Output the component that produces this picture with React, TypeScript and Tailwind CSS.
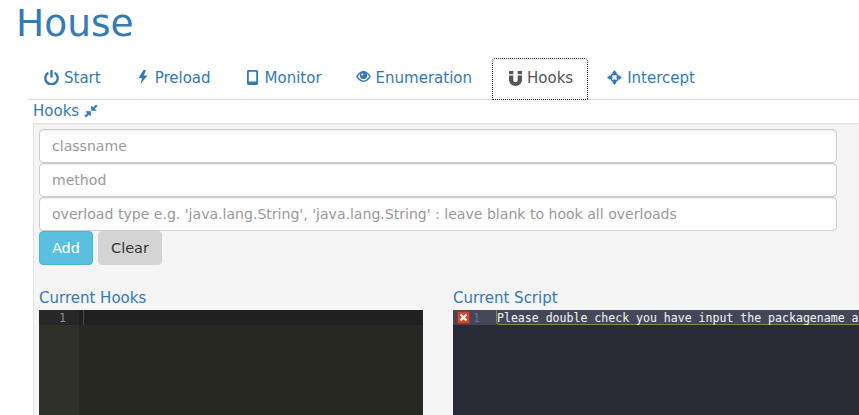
import React from "react";

const Power = () => (
  <svg width="15" height="15" viewBox="0 0 15 15" className="mr-[5px] shrink-0">
    <path d="M4.300 2.800A6.200 6.200 0 1 0 10.700 2.800" fill="none" stroke="currentColor" strokeWidth="2.400" />
    <rect x="6.300" y="0" width="2.400" height="7.500" fill="currentColor" />
  </svg>
);
const Bolt = () => (
  <svg width="15" height="15" viewBox="0 0 15 15" className="mr-[5px] shrink-0">
    <path d="M8.500 0 3.500 8H7L5.500 14l7-8.500H8.800L11 0z" fill="currentColor" />
  </svg>
);
const Phone = () => (
  <svg width="15" height="15" viewBox="0 0 15 15" className="mr-[5px] shrink-0">
    <path fillRule="evenodd" d="M3.500 0h8A1.500 1.500 0 0 1 13 1.500v12a1.500 1.500 0 0 1-1.500 1.500h-8A1.500 1.500 0 0 1 2 13.500v-12A1.500 1.500 0 0 1 3.500 0zM3.800 1.800v9.700h7.400V1.800z" fill="currentColor" />
  </svg>
);
const Eye = () => (
  <svg width="15" height="15" viewBox="0 0 15 15" className="mr-[5px] shrink-0">
    <path fillRule="evenodd" d="M0 6.500C2 3 4.700 1 7.500 1S13 3 15 6.500C13 9.800 10.300 12 7.500 12S2 9.800 0 6.500zM1.800 6.500C3.200 8.900 5.200 10.400 7.500 10.400S11.800 8.900 13.200 6.500C12.400 5.200 11.500 4.300 10.500 3.500A3.600 3.600 0 1 1 4.500 3.500C3.500 4.300 2.600 5.200 1.800 6.500z" fill="currentColor" />
    <circle cx="6.300" cy="4.500" r="1" fill="#fff" />
  </svg>
);
const Magnet = () => (
  <svg width="15" height="15" viewBox="0 0 15 15" className="mr-[4px] shrink-0">
    <path d="M1 4.500h4.300V9a2.200 2.200 0 0 0 4.400 0V4.500H14V9A6.500 6 0 0 1 1 9z" fill="currentColor" />
    <rect x="1" y="0" width="4.300" height="3.200" fill="currentColor" />
    <rect x="9.700" y="0" width="4.300" height="3.200" fill="currentColor" />
  </svg>
);
const Move = () => (
  <svg width="15" height="15" viewBox="0 0 15 15" className="mr-[5px] shrink-0">
    <path d="M7.500 0l2.300 3H8.700v2.500H6.300V3H5.200zM7.500 15l-2.300-3h1.100V9.500h2.400V12h1.100zM0 7.500l3-2.300v1.100h2.500v2.400H3v1.100zM15 7.500l-3 2.300V8.700H9.500V6.300H12V5.200z" fill="currentColor" />
    <circle cx="7.500" cy="7.500" r="3.700" fill="none" stroke="currentColor" strokeWidth="1.700" />
  </svg>
);
const Squeeze = () => (
  <svg width="14" height="14" viewBox="0 0 14 14" className="shrink-0">
    <path d="M7.200 6.800V1.500l2 1.800L12 .4 13.600 2l-2.900 2.800 2 2zM6.800 7.200v5.300l-2-1.800L2 13.600.4 12l2.900-2.800-2-2z" fill="currentColor" />
  </svg>
);

const tabClass = "flex items-center h-[41px] pb-[2px] px-[16px] text-[#337ab7] mr-[2px]";

function Field({ placeholder }: { placeholder: string }) {
  return (
    <input
      placeholder={placeholder}
      className="block w-full h-[34px] px-3 bg-white border border-[#ccc] rounded text-[14.070px] text-[#555] placeholder:text-[#999] shadow-[inset_0_1px_1px_rgba(0,0,0,0.075)]"
    />
  );
}

export default function App() {
  return (
    <div className="h-[415px] w-[859px] overflow-hidden bg-white font-['DejaVu_Sans',sans-serif] text-[15px] leading-5 text-[#333]">
      <h1 className="pl-4 pt-[3px] h-[58px] text-[37.5px] leading-10 text-[#337ab7]">House</h1>
      <div className="ml-[28px]">
        <nav className="flex h-[42px] border-b border-[#ddd]">
          <a className={tabClass}><Power />Start</a>
          <a className={tabClass}><Bolt />Preload</a>
          <a className={tabClass}><Phone />Monitor</a>
          <a className={tabClass}><Eye />Enumeration</a>
          <a className="flex items-center h-[42px] pb-[2px] ml-[2px] pl-[15px] pr-[14px] text-[#555] bg-white border border-dotted border-[#333] rounded-t mr-[3px]"><Magnet />Hooks</a>
          <a className={tabClass}><Move />Intercept</a>
        </nav>
        <div className="flex items-center gap-[5px] pl-[5px] pb-[2px] h-[23px] text-[#337ab7]">
          <span>Hooks</span>
          <Squeeze />
        </div>
        <div className="ml-[5px] bg-[#f5f5f5] border-t border-l border-[#e3e3e3] px-[5px] pt-[5px] h-[293px] shadow-[inset_0_1px_1px_rgba(0,0,0,0.05)]">
          <div className="w-[798px]">
            <Field placeholder="classname" />
            <Field placeholder="method" />
            <Field placeholder="overload type e.g. 'java.lang.String', 'java.lang.String' : leave blank to hook all overloads" />
          </div>
          <div className="flex gap-[5px]">
            <button className="h-[34px] w-[54px] rounded bg-[#5bc0de] border border-[#46b8da] text-white text-[14.500px]">Add</button>
            <button className="h-[34px] w-[64px] rounded bg-[#d4d4d4] border border-[#d4d4d4] text-[#333] text-[14.500px]">Clear</button>
          </div>
          <div className="flex gap-[30px] mt-[22px] w-[1000px]">
            <div className="w-[384px]">
              <div className="h-[23px] pt-[1px] text-[#337ab7]">Current Hooks</div>
              <div className="flex h-[120px] bg-[#272822] font-['DejaVu_Sans_Mono',monospace] text-[11.550px] leading-[15px]">
                <div className="w-10 bg-[#2f3129] text-[#8f908a]">
                  <div className="h-[15px] bg-[#272727] pt-[1px] pr-[13px] text-right">1</div>
                </div>
                <div className="flex-1">
                  <div className="h-[15px] bg-[#202020] pl-[4px]">
                    <div className="h-[15px] w-[1px] bg-[#4a4a4a]" />
                  </div>
                </div>
              </div>
            </div>
            <div className="w-[500px]">
              <div className="h-[23px] pt-[1px] text-[#337ab7]">Current Script</div>
              <div className="h-[120px] bg-[#282a36] font-['DejaVu_Sans_Mono',monospace] text-[11.550px] leading-[15px]">
                <div className="flex h-[15px] bg-[#44475a] text-[#6d7083]">
                  <div className="flex w-[43px] items-center pl-1 shrink-0">
                    <svg width="13" height="13" viewBox="0 0 13 13" className="shrink-0">
                      <rect width="13" height="13" fill="#d9452b" />
                      <rect x=".5" y=".5" width="12" height="12" fill="none" stroke="#a5321e" />
                      <path d="M3.500 3.500l6 6M9.500 3.500l-6 6" stroke="#fff" strokeWidth="2.400" />
                    </svg>
                    <span className="ml-[3px] pt-[1px]">1</span>
                  </div>
                  <div className="flex-1 h-[15px] pt-[1px] border-l border-b border-[#8a8a3a] rounded-bl-sm text-[#f8f8f2] whitespace-nowrap">
                    Please double check you have input the packagename a
                  </div>
                </div>
              </div>
            </div>
          </div>
        </div>
      </div>
    </div>
  );
}
